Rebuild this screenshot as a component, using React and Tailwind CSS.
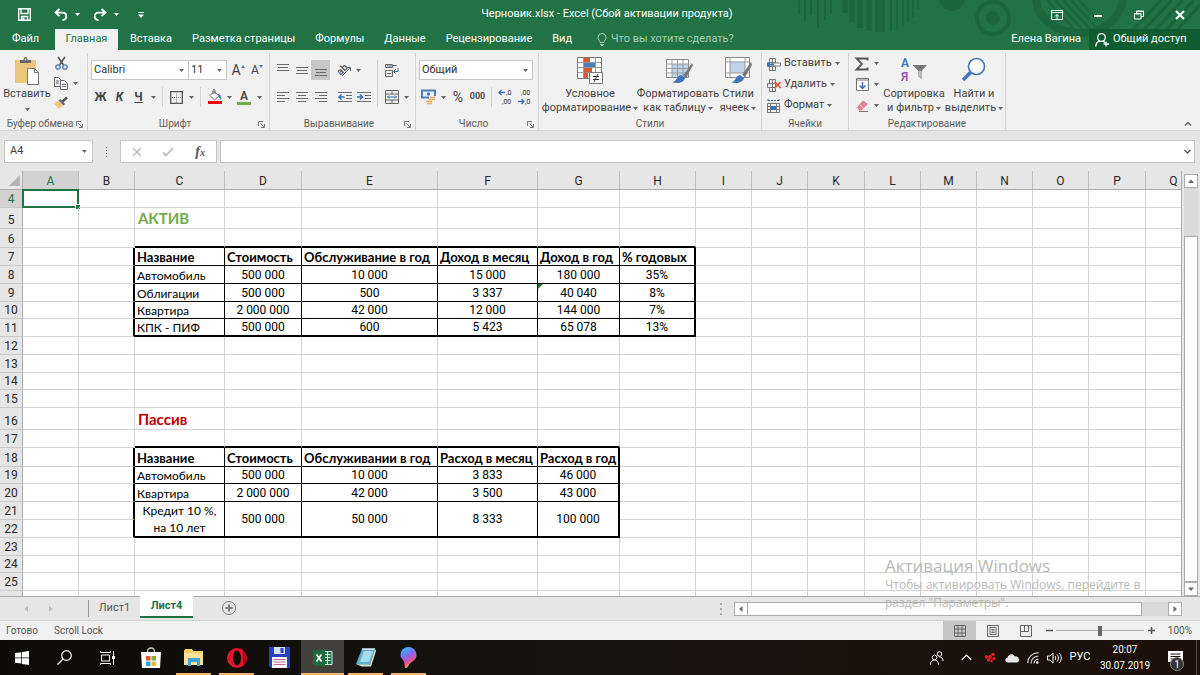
import { useState } from "react";

const UI_FONT = "font-[Roboto,'Noto_Sans',sans-serif]";
const SHEET_FONT = "font-[Lato,'Open_Sans',sans-serif]";

const COLUMNS = [
  ["A", "w-[56px]"],
  ["B", "w-[56px]"],
  ["C", "w-[90px]"],
  ["D", "w-[77px]"],
  ["E", "w-[136px]"],
  ["F", "w-[100px]"],
  ["G", "w-[82px]"],
  ["H", "w-[76px]"],
  ["I", "w-[56px]"],
  ["J", "w-[56px]"],
  ["K", "w-[57px]"],
  ["L", "w-[56px]"],
  ["M", "w-[56px]"],
  ["N", "w-[56px]"],
  ["O", "w-[56px]"],
  ["P", "w-[57px]"],
  ["Q", "w-[56px]"],
];

const ROW_HEIGHTS = {
  5: "h-[21px]",
  6: "h-[19px]",
  10: "h-[17px]",
  14: "h-[17px]",
  16: "h-[22px]",
  18: "h-[19px]",
  19: "h-[17px]",
  24: "h-[17px]",
  26: "h-6",
};

const ROWS = Array.from({ length: 23 }, (_, i) => i + 4);

const CELLS = {
  5: { C: "АКТИВ" },
  7: { C: "Название", D: "Стоимость", E: "Обслуживание в год", F: "Доход в месяц", G: "Доход в год", H: "% годовых" },
  8: { C: "Автомобиль", D: "500 000", E: "10 000", F: "15 000", G: "180 000", H: "35%" },
  9: { C: "Облигации", D: "500 000", E: "500", F: "3 337", G: "40 040", H: "8%" },
  10: { C: "Квартира", D: "2 000 000", E: "42 000", F: "12 000", G: "144 000", H: "7%" },
  11: { C: "КПК - ПИФ", D: "500 000", E: "600", F: "5 423", G: "65 078", H: "13%" },
  16: { C: "Пассив" },
  18: { C: "Название", D: "Стоимость", E: "Обслуживании в год", F: "Расход в месяц", G: "Расход в год" },
  19: { C: "Автомобиль", D: "500 000", E: "10 000", F: "3 833", G: "46 000" },
  20: { C: "Квартира", D: "2 000 000", E: "42 000", F: "3 500", G: "43 000" },
  21: { C: "Кредит 10 %, на 10 лет", D: "500 000", E: "50 000", F: "8 333", G: "100 000" },
};

const BLOCKS = [
  { top: 7, bottom: 11, cols: "CDEFGH" },
  { top: 18, bottom: 22, cols: "CDEFG" },
];

function cellBorders(row, col, span) {
  const last = row + span - 1;
  let right = "border-r border-r-[#d4d4d4]";
  let bottom = "border-b border-b-[#d4d4d4]";
  for (const b of BLOCKS) {
    const inRows = row >= b.top && row <= b.bottom;
    const inCols = b.cols.includes(col);
    if (inRows && inCols) {
      right = col === b.cols.at(-1) ? "border-r-2 border-r-black" : "border-r border-r-black";
      bottom = last === b.bottom ? "border-b-2 border-b-black" : "border-b border-b-black";
    }
    if (inRows && col === "B") right = "border-r-2 border-r-black";
    if (row === b.top - 1 && inCols) bottom = "border-b-2 border-b-black";
  }
  return `${right} ${bottom}`;
}

function cellText(row, col) {
  if (row === 5) return "text-[15px] font-bold text-[#70ad47] pl-[3px] pb-[2px]";
  if (row === 16) return "text-[15px] font-bold text-[#c00000] pl-[3px] pb-[2px]";
  if (row === 7 || row === 18) return "text-[13px] font-bold pl-[2px]";
  if (row === 21 && col === "C") return "text-[12px] text-center whitespace-normal px-1 leading-[17px]";
  if (col === "C") return "text-[12px] pl-[2px]";
  return "font-[Roboto,sans-serif] text-[12px] text-center";
}

/* ---------- small shared pieces ---------- */

function Caret({ className = "text-[#666]" }) {
  return (
    <svg viewBox="0 0 5 3" className={`h-[3px] w-[5px] shrink-0 ${className}`} aria-hidden="true">
      <path d="M0 0h5L2.5 3z" fill="currentColor" />
    </svg>
  );
}

function Icon({ size = 16, h, children, className = "" }) {
  return (
    <svg
      width={size}
      height={h || size}
      viewBox={`0 0 ${size} ${h || size}`}
      fill="none"
      className={`shrink-0 overflow-visible ${className}`}
      aria-hidden="true"
    >
      {children}
    </svg>
  );
}

function Tool({ label, className = "h-5 w-[19px]", children }) {
  return (
    <button type="button" aria-label={label} className={`flex shrink-0 items-center justify-center hover:bg-[#d5d5d5] ${className}`}>
      {children}
    </button>
  );
}

function Drop({ label, className = "h-5 w-[10px]" }) {
  return (
    <Tool label={label} className={className}>
      <Caret />
    </Tool>
  );
}

function Sep({ className = "h-5" }) {
  return <span className={`mx-1 w-px shrink-0 bg-[#d4d4d4] ${className}`} />;
}

function Group({ label, launcher, className, children }) {
  return (
    <section className={`flex shrink-0 flex-col border-r border-[#d4d4d4] ${className}`}>
      <div className="flex flex-1">{children}</div>
      <div className="flex h-3 items-center px-1 text-[10px] leading-3 text-[#605e5c]">
        <span className="flex-1 text-center whitespace-nowrap">{label}</span>
        {launcher && (
          <button type="button" aria-label={`${label}: параметры`}>
            <Icon size={7}>
              <path d="M.5 5V.5H5M2.5 2.5 6 6M6.5 3v3.5H3" stroke="#777" />
            </Icon>
          </button>
        )}
      </div>
    </section>
  );
}

function BigButton({ lines, drop, className, children }) {
  return (
    <button type="button" className={`flex shrink-0 flex-col items-center pt-1 text-[11px] leading-[14px] hover:bg-[#d5d5d5] ${className}`}>
      <span className="flex h-[30px] shrink-0 items-start">{children}</span>
      <span className="whitespace-nowrap">{lines[0]}</span>
      <span className="flex h-[14px] items-center gap-[2px] whitespace-nowrap">
        {lines[1]}
        {drop && <Caret />}
      </span>
    </button>
  );
}

function Select({ label, value, className }) {
  return (
    <label className={`relative flex h-5 items-center border border-[#c6c6c6] bg-white ${className}`}>
      <select aria-label={label} defaultValue={value} className="w-full appearance-none bg-transparent pl-[2px] text-[11px] text-[#333] outline-none">
        <option>{value}</option>
      </select>
      <span className="pointer-events-none absolute right-1">
        <Caret />
      </span>
    </label>
  );
}

function LinesIcon({ rows }) {
  return (
    <Icon size={14}>
      {rows.map(([x, y, w]) => (
        <path key={y} d={`M${x} ${y + 0.5}h${w}`} stroke="#6a6a6a" />
      ))}
    </Icon>
  );
}

/* ---------- title bar ---------- */

function HeaderPattern() {
  return (
    <svg className="pointer-events-none absolute top-0 right-0" width="410" height="40" viewBox="0 0 410 40" fill="none" aria-hidden="true">
      <g stroke="#1b663c" strokeWidth="3">
        <path d="M9 0v14M15 0v21M21 0v15M28 0v28M35 0v20M41 0v14" strokeWidth="2" />
        <path d="M55 0v13M62 0v22M70 0v28M79 0v31" strokeWidth="5" />
        <path d="M90 0v32" strokeWidth="10" />
        <path d="M101 0v31M107 0v29M113 0v26M118 0v22M123 0v17M128 0v9" strokeWidth="2" />
        <circle cx="203" cy="18" r="16" strokeWidth="4" />
        <path d="M246 0c2 18 20 33 44 33S330 18 333 0" strokeWidth="8" />
        <path d="m257 0 28 30M265 0l28 30M273 0l28 30M281 0l24 26M289 0l18 20" strokeWidth="2" />
        <path d="m343 30 28-30M354 30l28-30M365 30l28-30M376 30l28-30M387 30l23-25" strokeWidth="3" />
      </g>
      <circle cx="162" cy="-2" r="13" fill="#1b663c" />
      <circle cx="203" cy="18" r="7" fill="#1b663c" />
    </svg>
  );
}

function TitleBar() {
  return (
    <div className="relative flex h-[29px] items-center text-white">
      <div className="flex flex-1 items-center pl-[14px]">
        <Tool label="Сохранить" className="h-6 w-5">
          <Icon size={13}>
            <path d="M.7.7h11.6v11.6H.7z" stroke="#fff" strokeWidth="1.4" />
            <path d="M3 1v4.5h7V1M3.5 12V8.5h6V12" stroke="#fff" strokeWidth="1.4" />
            <path d="M4.5 9.5h2V12h-2z" fill="#fff" />
          </Icon>
        </Tool>
        <Tool label="Отменить" className="ml-[17px] h-6 w-5">
          <Icon size={14}>
            <path d="M5.5 1 1.5 4.6l4 3.6M2 4.6h6.5c5 0 5 7 0 7.4" stroke="#fff" strokeWidth="1.8" />
          </Icon>
        </Tool>
        <Drop label="Список отмены" className="h-6 w-[12px] *:text-white" />
        <Tool label="Вернуть" className="ml-[7px] h-6 w-5">
          <Icon size={14}>
            <path d="m8.5 1 4 3.6-4 3.6M12 4.6H5.5c-5 0-5 7 0 7.4" stroke="#fff" strokeWidth="1.8" />
          </Icon>
        </Tool>
        <Drop label="Список возврата" className="h-6 w-[12px] *:text-white" />
        <Tool label="Настройка панели" className="ml-[13px] h-6 w-3">
          <Icon size={6}>
            <path d="M0 .5h6" stroke="#fff" />
            <path d="M0 2.5h6L3 6z" fill="#fff" />
          </Icon>
        </Tool>
      </div>
      <h1 className="text-[11px] whitespace-nowrap">Черновик.xlsx - Excel (Сбой активации продукта)</h1>
      <div className="flex flex-1 justify-end">
        <Tool label="Параметры ленты" className="h-[26px] w-[41px]">
          <Icon size={12} h={10}>
            <path d="M.5.5h11v9H.5zM.5 2.5h11M6 9V4.5M4 6.5l2-2 2 2" stroke="#fff" />
          </Icon>
        </Tool>
        <Tool label="Свернуть" className="h-[26px] w-[41px]">
          <Icon size={8}>
            <path d="M0 5h8" stroke="#fff" strokeWidth="2" />
          </Icon>
        </Tool>
        <Tool label="Восстановить" className="h-[26px] w-[41px]">
          <Icon size={10}>
            <path d="M.5 3.5H7V9H.5zM2.5 3.5V1h7v5.5H7M.5 4H7M3 1.5h6" stroke="#fff" />
          </Icon>
        </Tool>
        <Tool label="Закрыть" className="h-[26px] w-[41px]">
          <Icon size={10}>
            <path d="m1 1 8 8M9 1 1 9" stroke="#fff" strokeWidth="2" />
          </Icon>
        </Tool>
      </div>
    </div>
  );
}

const MENU = ["Вставка", "Разметка страницы", "Формулы", "Данные", "Рецензирование", "Вид"];

function RibbonTabs() {
  return (
    <nav className="relative flex h-[21px] items-stretch text-[11px] whitespace-nowrap text-white">
      <button type="button" className="w-[55px] pr-1">Файл</button>
      <button type="button" className="w-[63px] bg-[#f1f1f1] text-[#217346]">Главная</button>
      <div className="ml-[2px] flex">
        {MENU.map((item) => (
          <button key={item} type="button" className="px-[10px]">
            {item}
          </button>
        ))}
      </div>
      <label className="ml-[15px] flex flex-1 items-center gap-1 text-[#a6cdb6]">
        <Icon size={10} h={13}>
          <path d="M3 9.5C3 7.5 1 7 1 4.5a4 4 0 0 1 8 0C9 7 7 7.5 7 9.5zM3 11.5h4M4 12.5h2" stroke="currentColor" />
        </Icon>
        <input
          placeholder="Что вы хотите сделать?"
          aria-label="Что вы хотите сделать?"
          className="w-full min-w-0 bg-transparent text-[11px] outline-none placeholder:text-[#a6cdb6]"
        />
      </label>
      <button type="button" className="px-2">Елена Вагина</button>
      <button type="button" className="flex w-[111px] items-center gap-1 bg-[#0e5c2f] pl-[6px]">
        <Icon size={14}>
          <circle cx="6.5" cy="4.5" r="3.8" stroke="#fff" strokeWidth="1.3" />
          <path d="M.7 13.5c.3-3 2-5 4.3-5.5M8 8l2 1.5M11 8.5v5M8.5 11H14" stroke="#fff" strokeWidth="1.3" />
        </Icon>
        Общий доступ
      </button>
    </nav>
  );
}

/* ---------- ribbon ---------- */

function ClipboardGroup() {
  return (
    <Group label="Буфер обмена" launcher className="w-[88px]">
      <button type="button" className="flex w-[54px] flex-col items-center pt-1 text-[11px] leading-[14px]">
        <Icon size={26} h={28}>
          <path d="M1 3h21v23H1z" fill="#ecc57e" />
          <path d="M6 3h3.5c0-4 4-4 4 0H17v3H6z" fill="#666" />
          <circle cx="11.5" cy="2.5" r="1" fill="#f1f1f1" />
          <path d="M13.5 11.5h7l4 4v12h-11z" fill="#fff" stroke="#777" />
          <path d="M20.5 11.5v4h4" stroke="#777" />
        </Icon>
        <span className="mt-[2px]">Вставить</span>
        <span className="mt-1 flex h-2 items-center">
          <Caret />
        </span>
      </button>
      <div className="flex flex-col">
        <Tool label="Вырезать" className="h-5 w-[14px]">
          <Icon size={13}>
            <path d="m3 0 5.5 8M10 0 4.500 8" stroke="#555" strokeWidth="1.6" />
            <circle cx="3" cy="10" r="2.2" stroke="#4a7ebb" strokeWidth="1.3" />
            <circle cx="10" cy="10" r="2.2" stroke="#4a7ebb" strokeWidth="1.3" />
          </Icon>
        </Tool>
        <div className="flex">
          <Tool label="Копировать" className="h-5 w-[14px]">
            <Icon size={14} h={13}>
              <path d="M.5.5h4l2 2v7h-6zM2 4h3M2 6h3" stroke="#666" />
              <path d="M6.500 3.500h4l3 3v6h-7z" fill="#fff" stroke="#666" />
              <path d="M8 7.500h4M8 9.500h4" stroke="#4a7ebb" />
            </Icon>
          </Tool>
          <Drop label="Параметры копирования" className="ml-[2px] h-5 w-[10px]" />
        </div>
        <Tool label="Формат по образцу" className="h-5 w-[14px]">
          <Icon size={14} h={12}>
            <path d="M0 6.500 4.500 4 9 8.500 5 12z" fill="#ecc57e" />
            <path d="m4.500 3.500 2-1.500 4.500 5-1.500 1.500z" fill="#666" />
            <path d="m8.500 4.500 4.500-4" stroke="#555" strokeWidth="2.5" />
          </Icon>
        </Tool>
      </div>
    </Group>
  );
}

function FontGroup() {
  return (
    <Group label="Шрифт" launcher className="w-[182px]">
      <div className="flex flex-col gap-[7px] px-[3px] pt-[7px] text-[#444]">
        <div className="flex items-center">
          <Select label="Шрифт" value="Calibri" className="w-[98px]" />
          <Select label="Размер" value="11" className="w-[38px] border-l-0" />
          <Tool label="Увеличить размер" className="ml-[2px] h-5 w-[18px] text-[14px]">
            A
            <Icon size={4} h={3} className="mb-2">
              <path d="M0 3 2 0l2 3z" fill="#4a7ebb" />
            </Icon>
          </Tool>
          <Tool label="Уменьшить размер" className="h-5 w-[20px] text-[12px]">
            A
            <Icon size={4} h={3} className="mb-2">
              <path d="m0 0 2 3 2-3z" fill="#4a7ebb" />
            </Icon>
          </Tool>
        </div>
        <div className="flex items-center text-[12px]">
          <Tool label="Полужирный"><b>Ж</b></Tool>
          <Tool label="Курсив"><b className="italic">К</b></Tool>
          <Tool label="Подчёркнутый"><b className="underline">Ч</b></Tool>
          <Drop label="Вид подчёркивания" />
          <Sep />
          <Tool label="Границы">
            <Icon size={13}>
              <path d="M.7.7h11.6v11.6H.7z" stroke="#555" strokeWidth="1.3" />
              <path d="M6.5 2.5v9M2 6.5h9" stroke="#777" strokeDasharray="1 1" />
            </Icon>
          </Tool>
          <Drop label="Выбор границ" />
          <Sep />
          <Tool label="Цвет заливки">
            <Icon size={16}>
              <path d="m3 6.500 4-4 5 4.500-4.500 4z" fill="#fff" stroke="#666" />
              <path d="M6 5V1.500c0-1.500 2-1.500 2 0V5" stroke="#666" />
              <path d="M11 5c3 .5 3.500 3 3 6-2-1-1-3-3-4z" fill="#4a7ebb" />
              <path d="M1 12h14v3H1z" fill="#e80000" />
            </Icon>
          </Tool>
          <Drop label="Выбор заливки" />
          <Tool label="Цвет текста" className="h-5 w-[20px]">
            <span className="border-b-[3px] border-[#70ad47] px-[3px] text-[12px] leading-[12px] font-semibold">A</span>
          </Tool>
          <Drop label="Выбор цвета текста" />
        </div>
      </div>
    </Group>
  );
}

const VALIGN = [
  ["По верхнему краю", [[1, 1, 12], [2, 4, 10], [1, 7, 12]]],
  ["По середине", [[1, 4, 12], [2, 7, 10], [1, 10, 12]]],
  ["По нижнему краю", [[1, 6, 12], [2, 9, 10], [1, 12, 12]]],
];
const HALIGN = [
  ["По левому краю", [[1, 2, 12], [1, 5, 8], [1, 8, 12], [1, 11, 8]]],
  ["По центру", [[1, 2, 12], [3, 5, 8], [1, 8, 12], [3, 11, 8]]],
  ["По правому краю", [[1, 2, 12], [5, 5, 8], [1, 8, 12], [5, 11, 8]]],
];

function AlignGroup() {
  return (
    <Group label="Выравнивание" launcher className="w-[146px]">
      <div className="flex flex-col gap-[7px] pt-[7px] pl-[3px]">
        <div className="flex">
          {VALIGN.map(([name, rows], i) => (
            <Tool key={name} label={name} className={i === 2 ? "h-5 w-[19px] bg-[#c6c6c6]" : "h-5 w-[19px]"}>
              <LinesIcon rows={rows} />
            </Tool>
          ))}
          <Tool label="Ориентация" className="ml-1 h-5 w-[19px]">
            <Icon size={16}>
              <text x="1" y="11" fontSize="10" fontWeight="600" fill="#555" transform="rotate(-45 6 8)">ab</text>
              <path d="m6 14 8-8M14.500 9V5.500H11" stroke="#666" />
            </Icon>
          </Tool>
          <Drop label="Выбор ориентации" />
        </div>
        <div className="flex">
          {HALIGN.map(([name, rows]) => (
            <Tool key={name} label={name}>
              <LinesIcon rows={rows} />
            </Tool>
          ))}
          <Tool label="Уменьшить отступ" className="ml-[5px] h-5 w-[19px]">
            <Icon size={14}>
              <path d="M0 2.500h14M8 5.500h6M8 8.500h6M0 11.500h14" stroke="#6a6a6a" />
              <path d="M1 7h5.500M3.500 4.500 1 7l2.500 2.500" stroke="#3b6fb6" strokeWidth="1.5" />
            </Icon>
          </Tool>
          <Tool label="Увеличить отступ">
            <Icon size={14}>
              <path d="M0 2.500h14M8 5.500h6M8 8.500h6M0 11.500h14" stroke="#6a6a6a" />
              <path d="M0 7h5.500M3 4.500 5.500 7 3 9.500" stroke="#3b6fb6" strokeWidth="1.5" />
            </Icon>
          </Tool>
        </div>
      </div>
      <Sep className="mt-[7px] h-[47px]" />
      <div className="flex flex-col gap-[7px] pt-[7px]">
        <Tool label="Перенести текст">
          <Icon size={15}>
            <path d="M1.500 1.500h7v3h-7zM1.500 7.500h7v6h-7zM3 10.500h4M8.500 2.500h4" stroke="#666" />
            <path d="M3 3h6M14 5v3.500h-4M11.500 6.500l-2 2 2 2" stroke="#3b6fb6" />
          </Icon>
        </Tool>
        <div className="flex">
          <Tool label="Объединить">
            <Icon size={14}>
              <path d="M.5.5h13v13H.5zM.5 4h13M.5 10h13M7 0v4M7 10v4" stroke="#666" />
              <path d="M2.500 7h9M4 5.500 2.500 7 4 8.500M10 5.500 11.500 7 10 8.500" stroke="#3b6fb6" />
            </Icon>
          </Tool>
          <Drop label="Параметры объединения" />
        </div>
      </div>
    </Group>
  );
}

function NumberGroup() {
  return (
    <Group label="Число" launcher className="w-[123px]">
      <div className="flex flex-col gap-[7px] px-[3px] pt-[7px] text-[#444]">
        <Select label="Числовой формат" value="Общий" className="w-[114px]" />
        <div className="flex items-center">
          <Tool label="Финансовый формат">
            <Icon size={16}>
              <path d="M1 1.500h13v7H1z" stroke="#4a7ebb" strokeWidth="2" />
              <circle cx="7.5" cy="5" r="1.8" fill="#4a7ebb" />
              <path d="M8 7h7v7H6v-4h2z" fill="#f1f1f1" />
              <path d="M9 8.500h5M8 10.500h6M5 12.500h6M6 14.500h5" stroke="#e8b462" strokeWidth="1.4" />
            </Icon>
          </Tool>
          <Drop label="Выбор валюты" />
          <Tool label="Процентный формат" className="h-5 w-5 text-[14px]">%</Tool>
          <Tool label="Формат с разделителями" className="h-5 w-[19px] text-[9px] font-semibold">000</Tool>
          <Sep />
          <Tool label="Увеличить разрядность">
            <Icon size={14} h={16}>
              <path d="M0 3.500h6M2.500 1 0 3.500 2.500 6" stroke="#3b6fb6" strokeWidth="1.3" />
              <text x="7" y="6" fontSize="7" fill="#333">,0</text>
              <text x="3" y="15" fontSize="7" fill="#333">,00</text>
            </Icon>
          </Tool>
          <Tool label="Уменьшить разрядность">
            <Icon size={14} h={16}>
              <text x="3" y="6" fontSize="7" fill="#333">,00</text>
              <path d="M0 12.500h6M3.500 10 6 12.500 3.500 15" stroke="#3b6fb6" strokeWidth="1.3" />
              <text x="7" y="15" fontSize="7" fill="#333">,0</text>
            </Icon>
          </Tool>
        </div>
      </div>
    </Group>
  );
}

function StylesGroup() {
  return (
    <Group label="Стили" className="w-[223px]">
      <BigButton lines={["Условное", "форматирование"]} drop className="ml-[3px] w-[96px]">
        <Icon size={27} h={28}>
          <path d="M.5.5h24v21H.5z" fill="#fff" stroke="#777" />
          <path d="M.5 5.500h24M.5 10.500h24M.5 15.500h24M6.500.5v21M18.500.5v21" stroke="#999" />
          <path d="M7 1h6v4H7zM7 11h8v4.500H7zM7 16h4v5H7z" fill="#cf5b3f" />
          <path d="M7 6h11v4H7z" fill="#4a7ebb" />
          <path d="M12.500 15.500h13v11h-13z" fill="#fff" stroke="#777" />
          <path d="M16 19.500h6M16 22.500h6M21 17l-4 8" stroke="#333" />
        </Icon>
      </BigButton>
      <BigButton lines={["Форматировать", "как таблицу"]} drop className="w-[80px]">
        <Icon size={28} h={28}>
          <path d="M2.500 2.500h22v18h-22z" fill="#fff" stroke="#888" />
          <path d="M8 7h16v13H8z" fill="#bdd3ea" />
          <path d="M2.500 7h22M2.500 11.500h22M2.500 16h22M8 2.500v18M13.500 2.500v18M19 2.500v18" stroke="#999" />
          <path d="m28 6-9 13 3 2 7-13z" fill="#777" />
          <path d="M8 25c5 0 4-6 9-7l4 3c-1 5-8 6-13 4z" fill="#3f77bd" />
        </Icon>
      </BigButton>
      <BigButton lines={["Стили", "ячеек"]} drop className="w-[40px]">
        <Icon size={27} h={28}>
          <path d="M.5.5h24v20H.5z" fill="#fff" stroke="#888" />
          <path d="M5 5h15v11H5z" fill="#bdd3ea" />
          <path d="M.5 5h24M.5 16h24M5 .5v20M20 .5v20" stroke="#999" />
          <path d="m26 5-9 13 3 2 7-12z" fill="#777" />
          <path d="M6 25c5 0 4-6 9-7l4 3c-1 5-8 6-13 4z" fill="#3f77bd" />
        </Icon>
      </BigButton>
    </Group>
  );
}

function CellsGroup() {
  const grid = "M2.5 1.5h6v4h-6zM2.5 9.5h6v4h-6zM5.5 1.5v12M.5 5.5h8v4h-8z";
  return (
    <Group label="Ячейки" className="w-[87px]">
      <div className="flex flex-col pl-[5px] text-[11px] whitespace-nowrap">
        <button type="button" className="flex h-[21px] items-center gap-[3px]">
          <Icon size={14}>
            <path d={grid} stroke="#777" />
            <path d="M5 6h8.500v3H5z" fill="#fff" stroke="#777" />
            <path d="M1 7.500h6M3 5.500l-2 2 2 2" stroke="#3b6fb6" strokeWidth="1.5" />
          </Icon>
          Вставить
          <Caret />
        </button>
        <button type="button" className="flex h-[21px] items-center gap-[3px]">
          <Icon size={14}>
            <path d={grid} stroke="#777" />
            <path d="m8 4 5.500 6M13.500 4 8 10" stroke="#d9532c" strokeWidth="1.6" />
          </Icon>
          Удалить
          <Caret />
        </button>
        <button type="button" className="flex h-[21px] items-center gap-[3px]">
          <Icon size={14}>
            <path d="M1 1.500h11M1 0v3M12 0v3" stroke="#3b6fb6" strokeDasharray="2 1" />
            <path d="M.5 4.500h12v9H.5zM.5 7.500h12M.5 10.500h12M3.500 4.500v9M9.500 4.500v9" stroke="#777" />
            <path d="M4 7h5v4H4z" fill="#3b6fb6" />
          </Icon>
          Формат
          <Caret />
        </button>
      </div>
    </Group>
  );
}

function EditGroup() {
  return (
    <Group label="Редактирование" className="w-[157px]">
      <div className="flex w-[33px] shrink-0 flex-col pl-1">
        <div className="flex">
          <Tool label="Сумма" className="h-[21px] w-[18px]">
            <Icon size={14}>
              <path d="M12.500 3.500V1.500H1.500L7 7l-5.500 5.500h11v-2" stroke="#555" strokeWidth="1.8" />
            </Icon>
          </Tool>
          <Drop label="Функции" className="h-[21px] w-[10px]" />
        </div>
        <div className="flex">
          <Tool label="Заполнить" className="h-[21px] w-[18px]">
            <Icon size={13}>
              <path d="M.5.5h12v12H.5z" fill="#fff" stroke="#777" />
              <path d="M1 2h11" stroke="#777" />
              <path d="M6.500 4v6.500M3.500 7.500l3 3 3-3" stroke="#3b6fb6" strokeWidth="1.5" />
            </Icon>
          </Tool>
          <Drop label="Варианты заполнения" className="h-[21px] w-[10px]" />
        </div>
        <div className="flex">
          <Tool label="Очистить" className="h-[21px] w-[18px]">
            <Icon size={13} h={12}>
              <path d="m1 7 6-6.500 5 3.500-6.500 6.500H3z" fill="#e8818f" />
              <path d="m3.500 4.500 4.500 4" stroke="#f8d5da" />
              <path d="M3 11.500h9" stroke="#777" />
            </Icon>
          </Tool>
          <Drop label="Варианты очистки" className="h-[21px] w-[10px]" />
        </div>
      </div>
      <BigButton lines={["Сортировка", "и фильтр"]} drop className="w-[64px]">
        <Icon size={26} h={27}>
          <text x="0" y="10" fontSize="12" fontWeight="600" fill="#3b77c2">А</text>
          <text x="0" y="24" fontSize="12" fontWeight="600" fill="#9455b5">Я</text>
          <path d="M11.500 8h14.500l-5.500 6v8l-3-2.500V14z" fill="#777" />
          <path d="M18.500 14v5.500l1 1V14z" fill="#fff" />
        </Icon>
      </BigButton>
      <BigButton lines={["Найти и", "выделить"]} drop className="w-[56px]">
        <Icon size={26} h={26}>
          <path d="M9.500 15.500 2 23" stroke="#3f77bd" strokeWidth="3.5" />
          <circle cx="15.5" cy="9.5" r="8" fill="#fff" stroke="#3f77bd" strokeWidth="1.6" />
        </Icon>
      </BigButton>
    </Group>
  );
}

function Ribbon() {
  return (
    <div className="flex h-[81px] border-b border-[#d4d4d4] bg-[#f1f1f1] pt-[3px] text-[#444]">
      <div className="flex flex-1">
        <ClipboardGroup />
        <FontGroup />
        <AlignGroup />
        <NumberGroup />
        <StylesGroup />
        <CellsGroup />
        <EditGroup />
      </div>
      <button type="button" aria-label="Свернуть ленту" className="self-end px-2 pb-1">
        <Icon size={8} h={5}>
          <path d="m1 4.500 3-3 3 3" stroke="#666" strokeWidth="1.5" />
        </Icon>
      </button>
    </div>
  );
}

function FormulaBar() {
  const [formula, setFormula] = useState("");
  return (
    <div className="flex h-10 items-center pt-px pr-[5px] pl-1">
      <label className="relative flex h-[23px] w-[89px] items-center border border-[#c6c6c6] bg-white">
        <input aria-label="Поле имени" defaultValue="A4" className="w-full bg-transparent pl-[5px] text-[11px] text-[#444] outline-none" />
        <span className="pointer-events-none absolute right-[5px]">
          <Caret />
        </span>
      </label>
      <span className="flex w-[27px] flex-col items-center gap-[2px]">
        <i className="size-px bg-[#888]" />
        <i className="size-px bg-[#888]" />
        <i className="size-px bg-[#888]" />
        <i className="size-px bg-[#888]" />
      </span>
      <div className="flex h-[23px] w-[97px] items-center justify-around border border-[#c6c6c6] bg-white">
        <Tool label="Отмена">
          <Icon size={10}>
            <path d="m1 1 8 8M9 1 1 9" stroke="#bbb" strokeWidth="1.5" />
          </Icon>
        </Tool>
        <Tool label="Ввод">
          <Icon size={12} h={10}>
            <path d="m1 5.500 3 3L11 1" stroke="#bbb" strokeWidth="1.8" />
          </Icon>
        </Tool>
        <Tool label="Вставить функцию">
          <i className="font-['Liberation_Serif',serif] text-[14px] leading-none font-bold text-[#555]">
            f<span className="text-[10px]">x</span>
          </i>
        </Tool>
      </div>
      <div className="ml-[3px] flex h-[23px] flex-1 items-center border border-[#c6c6c6] bg-white">
        <input
          aria-label="Строка формул"
          value={formula}
          onChange={(e) => setFormula(e.target.value)}
          className="min-w-0 flex-1 bg-transparent px-2 text-[12px] outline-none"
        />
        <button type="button" aria-label="Развернуть строку формул" className="px-[3px]">
          <Icon size={7} h={5}>
            <path d="m.5 1 3 3 3-3" stroke="#555" strokeWidth="1.5" />
          </Icon>
        </button>
      </div>
    </div>
  );
}

/* ---------- sheet ---------- */

function Sheet() {
  return (
    <div className="min-w-0 flex-1 overflow-hidden border-r border-[#ababab] bg-white">
      <table className={`w-px table-fixed border-separate border-spacing-0 leading-[15px] whitespace-nowrap text-black ${SHEET_FONT}`}>
        <colgroup>
          <col className="w-[23px]" />
          {COLUMNS.map(([name, width]) => (
            <col key={name} className={width} />
          ))}
        </colgroup>
        <thead>
          <tr className="h-[19px] font-[Roboto,sans-serif] text-[12px]">
            <td className="border-r border-b border-[#ababab] bg-[#e6e6e6] p-0">
              <svg viewBox="0 0 10 10" className="ml-[9px] size-[11px]" aria-hidden="true">
                <path d="M10 0v10H0z" fill="#b4b4b4" />
              </svg>
            </td>
            {COLUMNS.map(([name]) => (
              <th
                key={name}
                scope="col"
                className={`border-r border-b border-r-[#bdbdbd] p-0 pt-[2px] font-normal ${
                  name === "A" ? "border-b-[#217346] bg-[#d2d2d2] text-[#217346]" : "border-b-[#ababab] bg-[#e6e6e6] text-[#262626]"
                }`}
              >
                {name}
              </th>
            ))}
          </tr>
        </thead>
        <tbody>
          {ROWS.map((row) => (
            <tr key={row} className={ROW_HEIGHTS[row] || "h-[18px]"}>
              <th
                scope="row"
                className={`border-r border-b border-r-[#ababab] border-b-[#c8c8c8] p-0 align-bottom font-[Roboto,sans-serif] text-[12px] font-normal ${
                  row === 4 ? "bg-[#d2d2d2] text-[#217346]" : "bg-[#e6e6e6] text-[#262626]"
                }`}
              >
                {row}
              </th>
              {COLUMNS.map(([col]) => {
                if (row === 22 && "CDEFG".includes(col)) return null;
                const span = row === 21 && "CDEFG".includes(col) ? 2 : 1;
                return (
                  <td
                    key={col}
                    rowSpan={span}
                    className={`relative p-0 ${span === 2 ? "align-middle" : "align-bottom"} ${cellBorders(row, col, span)} ${cellText(row, col)}`}
                  >
                    {CELLS[row]?.[col]}
                    {row === 4 && col === "A" && (
                      <span className="absolute -inset-x-px -top-px -bottom-px border-2 border-[#217346]">
                        <i className="absolute -right-[3px] -bottom-[3px] size-[5px] border-t border-l border-white bg-[#217346]" />
                      </span>
                    )}
                    {row === 9 && col === "G" && (
                      <svg viewBox="0 0 5 5" className="absolute top-0 left-0 size-[5px]" aria-hidden="true">
                        <path d="M0 0h5L0 5z" fill="#1e7a34" />
                      </svg>
                    )}
                  </td>
                );
              })}
            </tr>
          ))}
        </tbody>
      </table>
    </div>
  );
}

function ScrollArrow({ label, d }) {
  return (
    <button type="button" aria-label={label} className="flex size-[14px] shrink-0 items-center justify-center border border-[#ababab] bg-white">
      <Icon size={6}>
        <path d={d} fill="#666" />
      </Icon>
    </button>
  );
}

function Workspace() {
  return (
    <div className="relative flex min-h-0 flex-1">
      <Sheet />
      <div className="flex w-[18px] flex-col items-center pt-[3px]">
        <ScrollArrow label="Вверх" d="M0 5h6L3 1.500z" />
        <div className="h-12 w-[14px] bg-[#dadada]" />
        <div className="w-[14px] flex-1 border border-[#ababab] bg-white" />
        <ScrollArrow label="Вниз" d="M0 1.500h6L3 5z" />
      </div>
    </div>
  );
}

function SheetTabs() {
  return (
    <div className="flex h-6 items-start border-t border-[#ababab] text-[12px]">
      <div className="flex h-[23px] w-[88px] items-center pl-[23px]">
        <button type="button" aria-label="Предыдущие листы">
          <Icon size={6}><path d="M5 0v6L1.500 3z" fill="#bbb" /></Icon>
        </button>
        <button type="button" aria-label="Следующие листы" className="ml-[19px]">
          <Icon size={6}><path d="M1 0v6l3.500-3z" fill="#bbb" /></Icon>
        </button>
      </div>
      <button type="button" className="mt-[3px] h-[17px] w-[52px] border-l border-[#999] text-[11px] text-[#555]">Лист1</button>
      <button type="button" className="-mt-px h-[22px] w-[53px] border-b-2 border-[#217346] bg-white text-[11px] font-bold text-[#217346]">Лист4</button>
      <button type="button" aria-label="Новый лист" className="mt-[4px] ml-[29px]">
        <Icon size={14}>
          <circle cx="7" cy="7" r="6.5" stroke="#777" />
          <path d="M7 3.500v7M3.500 7h7" stroke="#666" strokeWidth="1.5" />
        </Icon>
      </button>
      <div className="ml-auto flex w-[480px] items-center pt-[5px] pr-[18px]">
        <span className="flex w-[14px] shrink-0 flex-col gap-[3px] pr-3">
          <i className="size-[2px] bg-[#aaa]" />
          <i className="size-[2px] bg-[#aaa]" />
          <i className="size-[2px] bg-[#aaa]" />
        </span>
        <ScrollArrow label="Влево" d="M4.500 0v6L1 3z" />
        <div className="h-[14px] flex-1 border border-l-0 border-[#ababab] bg-white" />
        <div className="h-[14px] w-[26px] bg-[#dadada]" />
        <ScrollArrow label="Вправо" d="M1.500 0v6L5 3z" />
      </div>
    </div>
  );
}

function StatusBar() {
  return (
    <div className="flex h-5 items-center border-t border-[#d4d4d4] bg-[#f1f1f1] pl-[6px] text-[10px] text-[#555]">
      <span>Готово</span>
      <span className="ml-4">Scroll Lock</span>
      <div className="ml-auto flex items-center">
        <Tool label="Обычный" className="h-[19px] w-[33px] bg-[#c6c6c6]">
          <Icon size={12}>
            <path d="M.5.5h11v11H.5zM4 .5v11M8 .5v11M.5 4h11M.5 8h11" stroke="#666" />
          </Icon>
        </Tool>
        <Tool label="Разметка страницы" className="h-[19px] w-[33px]">
          <Icon size={12}>
            <path d="M.5.5h11v11H.5zM3 2.500h6v7H3zM4.500 4.500h3M4.500 6h3M4.500 7.500h3" stroke="#666" />
          </Icon>
        </Tool>
        <Tool label="Страничный режим" className="h-[19px] w-[33px]">
          <Icon size={12}>
            <path d="M.5.5h11v11H.5zM4.500.5v6M8.500.5v6M.5 6.500h8" stroke="#666" />
          </Icon>
        </Tool>
        <Tool label="Уменьшить масштаб" className="h-[19px] w-[14px]">
          <Icon size={7}><path d="M0 3.500h7" stroke="#555" strokeWidth="1.5" /></Icon>
        </Tool>
        <input
          type="range"
          aria-label="Масштаб"
          defaultValue="50"
          className="h-[11px] w-[88px] appearance-none bg-[linear-gradient(#aaa,#aaa)] bg-[length:100%_1px] bg-center bg-no-repeat [&::-webkit-slider-thumb]:h-[10px] [&::-webkit-slider-thumb]:w-1 [&::-webkit-slider-thumb]:appearance-none [&::-webkit-slider-thumb]:bg-[#666]"
        />
        <Tool label="Увеличить масштаб" className="h-[19px] w-[14px]">
          <Icon size={7}><path d="M0 3.500h7M3.500 0v7" stroke="#555" strokeWidth="1.5" /></Icon>
        </Tool>
        <span className="w-[42px] pr-2 text-right">100%</span>
      </div>
    </div>
  );
}

/* ---------- taskbar ---------- */

function TaskItem({ label, state = "", children }) {
  const look = {
    "": "",
    open: "after:absolute after:inset-x-1 after:bottom-0 after:h-[2px] after:bg-[#f3b56d]",
    active: "bg-[#42403c] after:absolute after:inset-x-0 after:bottom-0 after:h-[2px] after:bg-[#f3b56d]",
  }[state];
  return (
    <button type="button" aria-label={label} className={`relative flex h-full w-[43px] items-center justify-center ${look}`}>
      {children}
    </button>
  );
}

function Taskbar() {
  return (
    <div className="flex h-[35px] items-center bg-linear-to-r from-[#0d0b09] via-[#16140d] to-[#1c0f08] text-white">
      <TaskItem label="Пуск">
        <Icon size={14}>
          <path d="M0 2 6.300 1.200v5.300H0zM7 1.100 14 0v6.500H7zM0 7.300h6.300v5.300L0 11.800zM7 7.300h7V14l-7-1.100z" fill="#fff" />
        </Icon>
      </TaskItem>
      <TaskItem label="Поиск">
        <Icon size={15}>
          <circle cx="9.5" cy="5.5" r="4.8" stroke="#fff" strokeWidth="1.2" />
          <path d="m6 9-5.500 5.500" stroke="#fff" strokeWidth="1.2" />
        </Icon>
      </TaskItem>
      <TaskItem label="Представление задач">
        <Icon size={16} h={14}>
          <path d="M.5 0v1.500h10V0M.5 14v-1.500h10V14M1.500 4h8v6h-8zM13.500 0v14" stroke="#fff" />
          <path d="M12 5h3v3h-3z" fill="#fff" />
        </Icon>
      </TaskItem>
      <TaskItem label="Магазин">
        <Icon size={20} h={20}>
          <path d="M6.500 6V3.500a3.500 3.500 0 0 1 7 0V6" stroke="#ccc" strokeWidth="1.3" />
          <path d="M0 4h20l-1 16H1z" fill="#fff" />
          <path d="M5 8h4.500v4.500H5z" fill="#e2552c" />
          <path d="M10.500 8H15v4.500h-4.500z" fill="#7fb72c" />
          <path d="M5 13.500h4.500V18H5z" fill="#2da3dc" />
          <path d="M10.500 13.500H15V18h-4.500z" fill="#f6b52b" />
        </Icon>
      </TaskItem>
      <TaskItem label="Проводник" state="open">
        <Icon size={20} h={17}>
          <path d="M0 1.500 1 0h7l1.500 2H19v14H0z" fill="#f7cf63" />
          <path d="M0 4h19v12H0z" fill="#fbe296" />
          <path d="M4 9h12v8h-3v-4H7v4H4z" fill="#3fa2d9" />
        </Icon>
      </TaskItem>
      <TaskItem label="Opera" state="open">
        <Icon size={20}>
          <ellipse cx="10" cy="10" rx="10" ry="10" fill="#e0162b" />
          <path d="M16 2c4 3 5 12 0 16" fill="#a70014" />
          <ellipse cx="10" cy="10" rx="4" ry="7.5" fill="#110b09" />
        </Icon>
      </TaskItem>
      <TaskItem label="Диспетчер файлов">
        <Icon size={21}>
          <path d="M0 0h21v21H2l-2-2z" fill="#2b3fc4" />
          <path d="M5 0h11v7H5z" fill="#d6dcf0" />
          <path d="M11.500 1h3v5h-3z" fill="#2b3fc4" />
          <path d="M3 10h15v11H3z" fill="#fff" />
          <path d="M4.500 12.500h12M4.500 15h12M4.500 17.500h12" stroke="#c76a86" />
        </Icon>
      </TaskItem>
      <TaskItem label="Excel" state="active">
        <Icon size={20} h={18}>
          <path d="M10 2.500h9v13h-9z" fill="#217346" stroke="#d5e8dc" />
          <path d="M12 5.500h5.500M12 8.500h5.500M12 11.500h5.500M14.500 3v12" stroke="#d5e8dc" />
          <path d="M0 2 12 0v18L0 16z" fill="#1d6c40" />
          <path d="m3.500 5.500 5 7M8.500 5.500l-5 7" stroke="#fff" strokeWidth="1.7" />
        </Icon>
      </TaskItem>
      <TaskItem label="Блокнот" state="open">
        <Icon size={20} h={19}>
          <path d="M6 1h13l-5 17-14-2z" fill="#5fb0cd" />
          <path d="M8 3h9l-4 11H4z" fill="#a5dcec" />
          <path d="m19 1 1 2-5 15.500H6L0 16l14 1z" fill="#e6e1cf" />
          <path d="M6 1h13" stroke="#d7eef6" strokeWidth="1.5" />
        </Icon>
      </TaskItem>
      <TaskItem label="Paint 3D" state="open">
        <Icon size={17} h={21}>
          <defs>
            <linearGradient id="drop" x1="0.2" y1="0" x2="0.6" y2="1">
              <stop offset="0" stopColor="#2fc6f5" />
              <stop offset="0.4" stopColor="#7a6cf0" />
              <stop offset="0.7" stopColor="#e44fa0" />
              <stop offset="1" stopColor="#f9b233" />
            </linearGradient>
          </defs>
          <path d="M8.500 0a8 8 0 0 1 8 8c0 5-4.500 6-7 9-1.500 2-1.500 4-3.500 4s-1-3-2-6C3 12 .5 11.500.5 8a8 8 0 0 1 8-8z" fill="url(#drop)" />
        </Icon>
      </TaskItem>

      <div className="ml-auto flex h-full items-center">
        <Tool label="Люди" className="h-full w-8">
          <Icon size={14}>
            <circle cx="9.5" cy="3" r="2.3" stroke="#fff" />
            <circle cx="4.5" cy="6.5" r="2.3" stroke="#fff" />
            <path d="M.5 13.500c0-6 8-6 8 0M9 6c2.500 0 4 1 4 4" stroke="#fff" />
          </Icon>
        </Tool>
        <Tool label="Скрытые значки" className="h-full w-[26px]">
          <Icon size={11} h={7}><path d="m.7 6 4.800-5 4.800 5" stroke="#fff" strokeWidth="1.2" /></Icon>
        </Tool>
        <Tool label="Антивирус" className="h-full w-[22px]">
          <Icon size={12} h={11}>
            <g fill="#dc1f2b">
              <circle cx="6" cy="5" r="2" />
              <circle cx="9" cy="2.5" r="1.8" />
              <circle cx="2.5" cy="5" r="1.8" />
              <circle cx="10" cy="6.5" r="1.7" />
              <circle cx="4.5" cy="8" r="1.7" />
              <circle cx="7.5" cy="9" r="1.3" />
            </g>
          </Icon>
        </Tool>
        <Tool label="OneDrive" className="h-full w-[21px]">
          <Icon size={14} h={10}>
            <path d="M3 9.500C-.5 9.500-.5 5 2.500 4.700 3 1 8 0 9.500 3.300c3-.5 4.500 1.700 4.500 3.500 0 1.500-1 2.700-2.500 2.700z" fill="#e8e8e8" />
          </Icon>
        </Tool>
        <Tool label="Сеть" className="h-full w-[22px]">
          <Icon size={12}>
            <path d="M.7 11C1 5 5 1 11.500.7M4 11.500C4.200 7.500 7 4.500 11.500 4M7 11.500c.2-2 1.500-4 4.500-4.500" stroke="#ddd" strokeWidth="1.2" />
            <circle cx="10.3" cy="10.5" r="1.3" fill="#fff" />
          </Icon>
        </Tool>
        <Tool label="Громкость" className="h-full w-[20px]">
          <Icon size={15} h={12}>
            <path d="M.5 4h2.500l3-3v10l-3-3H.5zM8 4c1 1 1 3 0 4M10 2.500c2 2 2 5 0 7M12 1c3 3 3 7 0 10" stroke="#fff" />
          </Icon>
        </Tool>
        <button type="button" className="w-[32px] text-[11px]">РУС</button>
        <button type="button" className="w-[58px] text-center text-[10px] leading-4">
          20:07
          <br />
          30.07.2019
        </button>
        <Tool label="Уведомления" className="relative h-full w-[42px]">
          <Icon size={15} h={14}>
            <path d="M0 0h15v11H7l-3 3v-3H0z" fill="#fff" />
            <path d="M2.500 3h10M2.500 5.500h10M2.500 8h6" stroke="#1a1009" />
          </Icon>
          <span className="absolute right-3 bottom-1 flex size-[14px] items-center justify-center rounded-full border border-[#888] bg-[#333] text-[10px]">1</span>
        </Tool>
        <span className="mr-[3px] h-full w-px bg-[#5a4a40]" />
      </div>
    </div>
  );
}

export default function App() {
  return (
    <div className={`relative flex h-screen flex-col overflow-hidden bg-[#e6e6e6] ${UI_FONT}`}>
      <header className="relative bg-[#217346]">
        <HeaderPattern />
        <TitleBar />
        <RibbonTabs />
      </header>
      <Ribbon />
      <FormulaBar />
      <main className="flex min-h-0 flex-1 flex-col">
        <Workspace />
        <SheetTabs />
      </main>
      <StatusBar />
      <Taskbar />
      <div className="pointer-events-none absolute right-[50px] bottom-[63px] w-[265px] font-['Open_Sans',sans-serif] text-[#b8b8b8]">
        <p className="text-[17px] leading-[20px]">Активация Windows</p>
        <p className="text-[12px] leading-[18px] whitespace-nowrap">
          Чтобы активировать Windows, перейдите в<br />
          раздел "Параметры".
        </p>
      </div>
    </div>
  );
}
